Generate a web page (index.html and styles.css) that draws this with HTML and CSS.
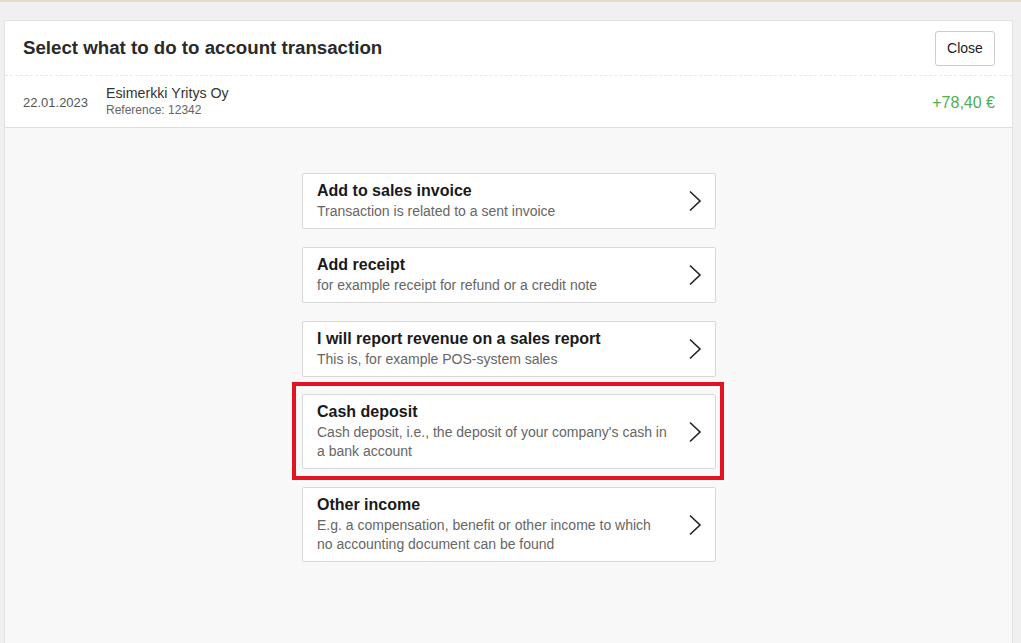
FILE: index.html
```html
<!DOCTYPE html>
<html lang="en">
  <head>
    <meta charset="UTF-8" />
    <title>Select what to do to account transaction</title>
    <link rel="stylesheet" href="styles.css">
  </head>
  <body>
    <div class="top-line"></div>
    <div class="modal">
      <div class="modal-header">
        <h2>Select what to do to account transaction</h2>
        <button class="close-btn">Close</button>
      </div>
      <div class="transaction">
        <div class="tx-date">22.01.2023</div>
        <div class="tx-info">
          <div class="tx-name">Esimerkki Yritys Oy</div>
          <div class="tx-ref">Reference: 12342</div>
        </div>
        <div class="tx-amount">+78,40 €</div>
      </div>
      <div class="modal-body">
        <div class="options">
          <a class="option" href="#">
            <div class="option-text">
              <div class="option-title">Add to sales invoice</div>
              <div class="option-desc">Transaction is related to a sent invoice</div>
            </div>
            <svg class="chevron" width="14" height="22" viewBox="0 0 14 22"><path d="M2 1.5 L12 11 L2 20.5" fill="none" stroke="#222" stroke-width="1.6"/></svg>
          </a>
          <a class="option" href="#">
            <div class="option-text">
              <div class="option-title">Add receipt</div>
              <div class="option-desc">for example receipt for refund or a credit note</div>
            </div>
            <svg class="chevron" width="14" height="22" viewBox="0 0 14 22"><path d="M2 1.5 L12 11 L2 20.5" fill="none" stroke="#222" stroke-width="1.6"/></svg>
          </a>
          <a class="option" href="#">
            <div class="option-text">
              <div class="option-title">I will report revenue on a sales report</div>
              <div class="option-desc">This is, for example POS-system sales</div>
            </div>
            <svg class="chevron" width="14" height="22" viewBox="0 0 14 22"><path d="M2 1.5 L12 11 L2 20.5" fill="none" stroke="#222" stroke-width="1.6"/></svg>
          </a>
          <!-- highlighted option -->
          <a class="option marked" href="#">
            <div class="option-text">
              <div class="option-title">Cash deposit</div>
              <div class="option-desc">Cash deposit, i.e., the deposit of your company's cash in a bank account</div>
            </div>
            <svg class="chevron" width="14" height="22" viewBox="0 0 14 22"><path d="M2 1.5 L12 11 L2 20.5" fill="none" stroke="#222" stroke-width="1.6"/></svg>
          </a>
          <a class="option" href="#">
            <div class="option-text">
              <div class="option-title">Other income</div>
              <div class="option-desc">E.g. a compensation, benefit or other income to which no accounting document can be found</div>
            </div>
            <svg class="chevron" width="14" height="22" viewBox="0 0 14 22"><path d="M2 1.5 L12 11 L2 20.5" fill="none" stroke="#222" stroke-width="1.6"/></svg>
          </a>
        </div>
      </div>
    </div>
  </body>
</html>
```

FILE: styles.css
```css
html, body {
  margin: 0;
  height: 100%;
}
body {
  font-family: "Liberation Sans", Arial, sans-serif;
  background-color: #f0f0f0;
  color: #222;
  overflow: hidden;
}
.top-line {
  height: 2px;
  background-color: #e8d8c8;
}
.modal {
  margin: 18px 8px 0 4px;
  background-color: #fff;
  border: 1px solid #e2e2e2;
  border-bottom: none;
  height: calc(100% - 21px);
  display: flex;
  flex-direction: column;
}
.modal-header {
  display: flex;
  align-items: center;
  justify-content: space-between;
  padding: 0 17px 0 18px;
  height: 54px;
  border-bottom: 1px dashed #e8e8e8;
}
.modal-header h2 {
  margin: 0;
  font-size: 18.7px;
  font-weight: bold;
  color: #2a2a2a;
}
.close-btn {
  font-family: inherit;
  font-size: 14px;
  color: #222;
  background-color: #fff;
  border: 1px solid #ccc;
  border-radius: 3px;
  width: 60px;
  height: 35px;
  padding: 0;
}
.transaction {
  display: flex;
  align-items: center;
  padding: 0 17px 0 18px;
  height: 51px;
  border-bottom: 1px solid #ddd;
}
.tx-date {
  font-size: 13px;
  color: #555;
  width: 83px;
  margin-top: 2px;
}
.tx-info {
  flex: 1;
}
.tx-name {
  font-size: 14.2px;
  color: #333;
  line-height: 17px;
}
.tx-ref {
  font-size: 12px;
  color: #666;
  line-height: 17px;
}
.tx-amount {
  font-size: 16px;
  color: #4caf50;
  margin-top: 2px;
}
.modal-body {
  flex: 1;
  background-color: #f8f8f8;
  padding-top: 45px;
}
.options {
  width: 414px;
  margin-left: 297px;
  display: flex;
  flex-direction: column;
  gap: 18px;
}
.option {
  position: relative;
  display: flex;
  align-items: center;
  background-color: #fff;
  border: 1px solid #d8d8d8;
  border-radius: 2px;
  padding: 7px 13px 7px 14px;
  text-decoration: none;
  color: inherit;
}
.option.marked {
  margin-top: -1px;
}
/* red annotation frame around the highlighted option */
.option.marked::after {
  content: "";
  position: absolute;
  top: -13px;
  left: -11px;
  right: -9px;
  bottom: -12px;
  border: 4px solid #e2141f;
  pointer-events: none;
}
.option-text {
  flex: 1;
  padding-right: 19px;
}
.option-title {
  font-size: 16px;
  font-weight: bold;
  color: #1a1a1a;
  line-height: 20px;
}
.option-desc {
  font-size: 14px;
  color: #666;
  line-height: 19px;
  margin-top: 1px;
}
.chevron {
  flex: none;
}
```
